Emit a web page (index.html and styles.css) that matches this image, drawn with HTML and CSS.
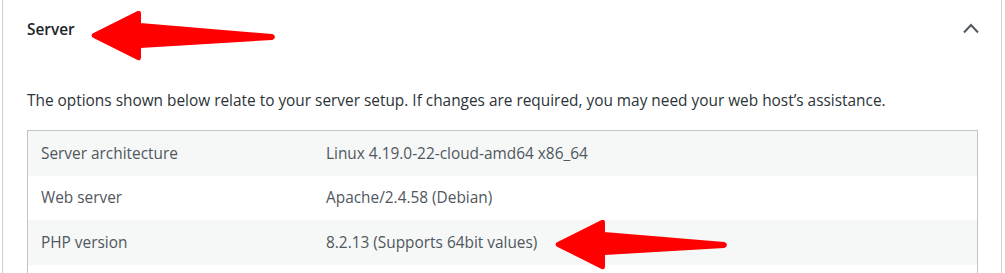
FILE: index.html
```html
<!DOCTYPE html>
<html>
<head>
<meta charset="utf-8">
<link rel="stylesheet" href="styles.css">
</head>
<body>
<div class="panel">
  <div class="header">
    <h3 class="title">Server</h3>
    <svg class="chevron" width="16" height="11" viewBox="0 0 16 11"><path d="M1 9.5 L8 2 L15 9.5" fill="none" stroke="#50575e" stroke-width="2"/></svg>
  </div>
  <div class="body">
    <p class="desc">The options shown below relate to your server setup. If changes are required, you may need your web host’s assistance.</p>
    <div class="table">
      <div class="row alt"><div class="cell label">Server architecture</div><div class="cell">Linux 4.19.0-22-cloud-amd64 x86_64</div></div>
      <div class="row"><div class="cell label">Web server</div><div class="cell">Apache/2.4.58 (Debian)</div></div>
      <div class="row alt"><div class="cell label">PHP version</div><div class="cell">8.2.13 (Supports 64bit values)</div></div>
      <div class="row"><div class="cell label">&nbsp;</div><div class="cell">&nbsp;</div></div>
    </div>
  </div>
  <svg class="arrow a1" width="200" height="60" viewBox="0 0 200 60"><path d="M4 23 L48 1 Q50 0 50 3 L50 13 L182 24 Q186 26 182 28 L50 36 L50 46 Q50 49 48 48 L4 26 Q1 24.5 4 23 Z" fill="#ff0000" stroke="#ff0000" stroke-width="2" stroke-linejoin="round"/></svg>
  <svg class="arrow a2" width="200" height="60" viewBox="0 0 200 60"><path d="M4 23 L48 1 Q50 0 50 3 L50 13 L170 23 Q174 25 170 27 L50 34 L50 46 Q50 49 48 48 L4 26 Q1 24.5 4 23 Z" fill="#ff0000" stroke="#ff0000" stroke-width="2" stroke-linejoin="round"/></svg>
</div>
</body>
</html>
```
FILE: styles.css
```css
html, body {
  margin: 0;
  padding: 0;
  background: #ffffff;
}
body {
  font-family: "Open Sans", "Noto Sans", sans-serif;
  font-size: 15.4px;
  color: #1d2327;
}
.panel {
  position: relative;
  margin-left: 2px;
  width: 998px;
  height: 273px;
  overflow: hidden;
  border-left: 1px solid #d0d0d2;
  border-right: 1px solid #d0d0d2;
  background: #fff;
}
.header {
  display: flex;
  align-items: center;
  justify-content: space-between;
  height: 58px;
  padding: 0 22px 0 24px;
}
.title {
  margin: 0;
  font-size: 15.4px;
  font-weight: 600;
  color: #1d2327;
}
.chevron {
  display: block;
  margin-top: -2px;
}
.body {
  padding: 0 24px;
}
.desc {
  margin: 32px 0 18px 0;
  line-height: 22px;
  color: #2c3338;
}
.table {
  width: 949px;
  border: 1px solid #c3c4c7;
  border-bottom: none;
}
.row {
  display: grid;
  grid-template-columns: 298px 1fr;
  height: 44.5px;
  align-items: center;
  color: #50575e;
}
.row.alt {
  background: #f6f7f7;
}
.cell.label {
  padding-left: 13px;
}
.arrow {
  position: absolute;
}
.a1 {
  left: 87px;
  top: 11px;
}
.a2 {
  left: 551px;
  top: 220px;
}
```
